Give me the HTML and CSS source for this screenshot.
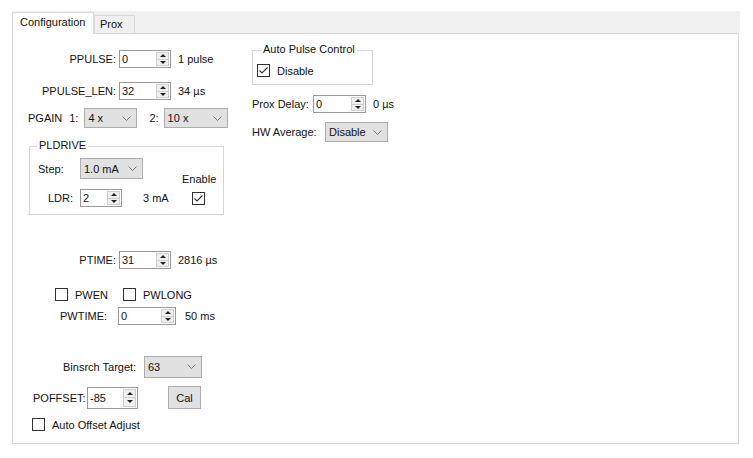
FILE: index.html
```html
<!DOCTYPE html>
<html>
<head>
<meta charset="utf-8">
<link rel="stylesheet" href="styles.css">
</head>
<body>
<div class="window">
  <div class="tabstrip">
    <div class="tab active">Configuration</div>
    <div class="tab">Prox</div>
  </div>
  <div class="panel">
    <div class="col-left">
      <div class="row r-a">
        <span class="lbl lbl-main">PPULSE:</span>
        <span class="num w52"><span class="val">0</span><span class="spin"><span class="up"></span><span class="dn"></span></span></span>
        <span class="unit">1 pulse</span>
      </div>
      <div class="row r-b">
        <span class="lbl lbl-main">PPULSE_LEN:</span>
        <span class="num w52"><span class="val">32</span><span class="spin"><span class="up"></span><span class="dn"></span></span></span>
        <span class="unit">34 µs</span>
      </div>
      <div class="row r-c">
        <span class="pgain">PGAIN</span>
        <span class="g1">1:</span>
        <span class="combo w53"><span class="val">4 x</span><svg class="chev" width="9" height="5" viewBox="0 0 9 5"><polyline points="0.5,0.5 4.5,4.5 8.5,0.5" fill="none" stroke="#777" stroke-width="1"/></svg></span>
        <span class="g2">2:</span>
        <span class="combo w64"><span class="val">10 x</span><svg class="chev" width="9" height="5" viewBox="0 0 9 5"><polyline points="0.5,0.5 4.5,4.5 8.5,0.5" fill="none" stroke="#777" stroke-width="1"/></svg></span>
      </div>
      <div class="group grp-pl">
        <span class="legend">PLDRIVE</span>
        <div class="grp-body">
          <div class="grp-left">
            <div class="row r-step">
              <span class="lbl lbl-step">Step:</span>
              <span class="combo w63"><span class="val">1.0 mA</span><svg class="chev" width="9" height="5" viewBox="0 0 9 5"><polyline points="0.5,0.5 4.5,4.5 8.5,0.5" fill="none" stroke="#777" stroke-width="1"/></svg></span>
            </div>
            <div class="row r-ldr">
              <span class="lbl lbl-ldr">LDR:</span>
              <span class="num w42"><span class="val">2</span><span class="spin"><span class="up"></span><span class="dn"></span></span></span>
              <span class="unit u-ldr">3 mA</span>
            </div>
          </div>
          <div class="grp-right">
            <span class="enable">Enable</span>
            <span class="chk chk-en"><svg width="11" height="11" viewBox="0 0 11 11"><polyline points="1.5,5.5 4,8 9.5,2.5" fill="none" stroke="#333" stroke-width="1.1"/></svg></span>
          </div>
        </div>
      </div>
      <div class="row r-d">
        <span class="lbl lbl-main">PTIME:</span>
        <span class="num w52"><span class="val">31</span><span class="spin"><span class="up"></span><span class="dn"></span></span></span>
        <span class="unit">2816 µs</span>
      </div>
      <div class="row r-e">
        <span class="chk"></span><span class="ctext">PWEN</span>
        <span class="chk chk-2"></span><span class="ctext">PWLONG</span>
      </div>
      <div class="row r-f">
        <span class="lbl lbl-pw">PWTIME:</span>
        <span class="num w58"><span class="val">0</span><span class="spin"><span class="up"></span><span class="dn"></span></span></span>
        <span class="unit u-pw">50 ms</span>
      </div>
      <div class="row r-g">
        <span class="lbl lbl-bin">Binsrch Target:</span>
        <span class="combo w58"><span class="val">63</span><svg class="chev" width="9" height="5" viewBox="0 0 9 5"><polyline points="0.5,0.5 4.5,4.5 8.5,0.5" fill="none" stroke="#777" stroke-width="1"/></svg></span>
      </div>
      <div class="row r-h">
        <span class="lbl lbl-off">POFFSET:</span>
        <span class="num w51 h22"><span class="val">-85</span><span class="spin"><span class="up"></span><span class="dn"></span></span></span>
        <span class="btn">Cal</span>
      </div>
      <div class="row r-i">
        <span class="chk"></span><span class="ctext">Auto Offset Adjust</span>
      </div>
    </div>
    <div class="col-right">
      <div class="group grp-ap">
        <span class="legend">Auto Pulse Control</span>
        <div class="row r-dis">
          <span class="chk"><svg width="11" height="11" viewBox="0 0 11 11"><polyline points="1.5,5.5 4,8 9.5,2.5" fill="none" stroke="#333" stroke-width="1.1"/></svg></span>
          <span class="ctext">Disable</span>
        </div>
      </div>
      <div class="row r-pd">
        <span class="lbl lbl-pd">Prox Delay:</span>
        <span class="num w53"><span class="val">0</span><span class="spin"><span class="up"></span><span class="dn"></span></span></span>
        <span class="unit">0 µs</span>
      </div>
      <div class="row r-hw">
        <span class="lbl lbl-hw">HW Average:</span>
        <span class="combo w63"><span class="val">Disable</span><svg class="chev" width="9" height="5" viewBox="0 0 9 5"><polyline points="0.5,0.5 4.5,4.5 8.5,0.5" fill="none" stroke="#777" stroke-width="1"/></svg></span>
      </div>
    </div>
  </div>
</div>
</body>
</html>
```
FILE: styles.css
```css
* { box-sizing: border-box; }
body {
  margin: 0;
  background: #fff;
  font-family: "Liberation Sans", Arial, sans-serif;
  font-size: 11px;
  color: #111;
}
.window { padding: 11px 0 0 12px; }
.tabstrip {
  width: 728px;
  height: 22px;
  background: #f0f0f0;
  display: flex;
  align-items: flex-end;
}
.tab {
  height: 18px;
  width: 41px;
  border: 1px solid #d9d9d9;
  border-bottom: none;
  background: #f0f0f0;
  padding-left: 5px;
  line-height: 17px;
}
.tab.active {
  height: 22px;
  width: 82px;
  background: #fff;
  margin-bottom: -1px;
  position: relative;
  z-index: 1;
  padding-left: 7px;
  line-height: 19px;
}
.panel {
  width: 727px;
  height: 411px;
  border: 1px solid #d9d9d9;
  background: #fff;
  display: flex;
}
.col-left { width: 239px; display: flex; flex-direction: column; }
.col-right { flex: 1; display: flex; flex-direction: column; }

.row { display: flex; align-items: center; white-space: nowrap; }
.lbl { display: inline-block; }
.lbl-main { width: 103px; text-align: right; margin-right: 3px; }
.unit { margin-left: 7px; }

/* numeric up/down */
.num {
  display: flex;
  height: 18px;
  border: 1px solid #9a9a9a;
  background: #fff;
  padding: 1px 1px 1px 2px;
}
.num .val { flex: 1; line-height: 14px; }
.num.h22 { height: 22px; }
.num.h22 .val { line-height: 18px; }
.spin {
  width: 13px;
  display: flex;
  flex-direction: column;
  border: 1px solid #cfcfcf;
  background: #efefef;
}
.spin .up, .spin .dn {
  flex: 1;
  display: flex;
  align-items: center;
  justify-content: center;
}
.spin .up { border-bottom: 1px solid #cfcfcf; }
.spin .up::after {
  content: "";
  border-left: 3px solid transparent;
  border-right: 3px solid transparent;
  border-bottom: 3px solid #222;
}
.spin .dn::after {
  content: "";
  border-left: 3px solid transparent;
  border-right: 3px solid transparent;
  border-top: 3px solid #222;
}
.w42 { width: 42px; }
.w51 { width: 51px; }
.w52 { width: 52px; }
.w53 { width: 53px; }
.w58 { width: 58px; }
.w63 { width: 63px; }
.w64 { width: 64px; }

/* combo box */
.combo {
  display: flex;
  align-items: center;
  height: 20px;
  border: 1px solid #adadad;
  background: #e1e1e1;
  padding: 0 5px 0 3px;
}
.combo .val { flex: 1; }
.chev { display: block; }

/* checkbox */
.chk {
  width: 13px;
  height: 13px;
  border: 1px solid #333;
  background: #fff;
  display: inline-flex;
  align-items: center;
  justify-content: center;
  flex: none;
}
.chk svg { display: block; }
.ctext { margin-left: 7px; }

/* group box */
.group {
  border: 1px solid #d6d6d6;
  display: flex;
  flex-direction: column;
}
.legend {
  align-self: flex-start;
  background: #fff;
  line-height: 13px;
  margin-top: -8px;
  padding: 0 2px;
}

/* rows of left column */
.r-a { margin-top: 16px; height: 18px; }
.r-b { margin-top: 14px; height: 18px; }
.r-c { margin-top: 8px; height: 20px; }
.pgain { margin-left: 15px; }
.g1 { margin-left: 7px; margin-right: 6px; }
.g2 { margin-left: 12px; margin-right: 5px; }

.grp-pl { margin: 18px 0 0 16px; width: 195px; height: 69px; }
.grp-pl .legend { margin-left: 7px; }
.grp-body { display: flex; }
.grp-left { width: 152px; display: flex; flex-direction: column; }
.r-step { margin-top: 6px; height: 21px; }
.r-step .combo { height: 21px; }
.lbl-step { width: 50px; padding-left: 8px; }
.r-ldr { margin-top: 10px; height: 18px; }
.lbl-ldr { width: 50px; padding-left: 18px; }
.u-ldr { margin-left: 21px; }
.grp-right { display: flex; flex-direction: column; align-items: flex-start; }
.enable { margin-top: 21px; line-height: 13px; }
.chk-en { margin: 6px 0 0 10px; }

.r-d { margin-top: 36px; height: 18px; }
.r-e { margin-top: 19px; height: 13px; padding-left: 42px; }
.chk-2 { margin-left: 15px; }
.r-f { margin-top: 6px; height: 18px; }
.lbl-pw { width: 105px; padding-left: 47px; }
.u-pw { margin-left: 9px; }
.r-g { margin-top: 31px; height: 21px; }
.r-g .combo { height: 22px; }
.lbl-bin { width: 131px; padding-left: 50px; }
.r-h { margin-top: 9px; height: 23px; }
.lbl-off { width: 74px; padding-left: 20px; }
.btn {
  margin-left: 30px;
  width: 33px;
  height: 23px;
  border: 1px solid #adadad;
  background: #e1e1e1;
  display: flex;
  align-items: center;
  justify-content: center;
}
.r-i { margin-top: 9px; height: 13px; padding-left: 19px; }

/* right column */
.grp-ap { margin-top: 16px; width: 121px; height: 35px; }
.grp-ap .legend { margin-left: 8px; }
.r-dis { margin-top: 8px; height: 13px; padding-left: 4px; }
.r-pd { margin-top: 10px; height: 18px; }
.lbl-pd { width: 61px; }
.r-hw { margin-top: 9px; height: 20px; }
.lbl-hw { width: 73px; }
```
